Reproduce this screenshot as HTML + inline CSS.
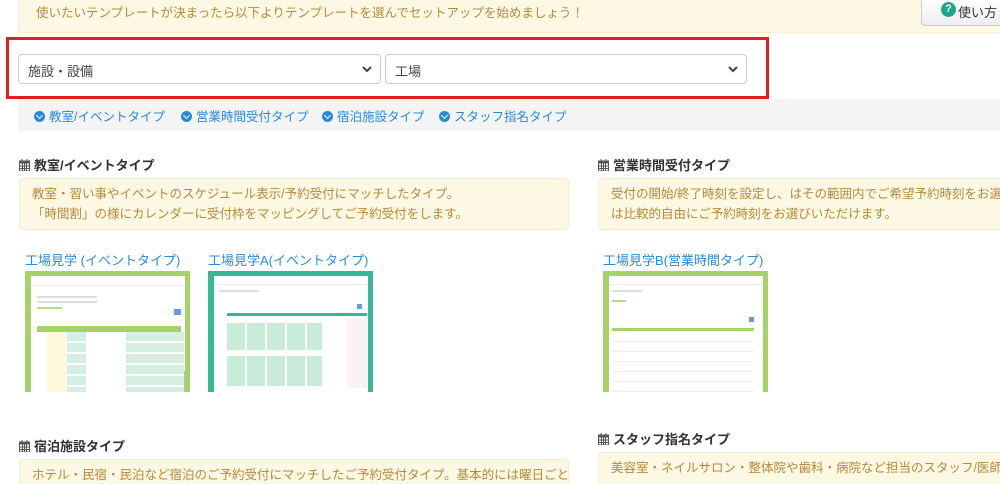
<!DOCTYPE html>
<html><head><meta charset="utf-8"><style>
*{box-sizing:border-box;margin:0;padding:0}
html,body{width:1000px;height:484px;overflow:hidden}
body{background:#fff;position:relative;font-family:"Liberation Sans","Noto Sans CJK JP",sans-serif;}
.a{position:absolute}
.alert{position:absolute;background:#fcf8e3;border:1px solid #faebcc;border-radius:4px;color:#b8893a;font-size:12.5px;line-height:20px;padding:5px 0 0 12px;white-space:nowrap;overflow:hidden}
.sel{position:absolute;top:54px;height:30px;border:1px solid #ccc;border-radius:4px;background:#fff;font-size:13px;color:#444;padding:6px 0 0 9px}
.sel svg{position:absolute;right:8px;top:11px}
.lk{position:absolute;top:106px;font-size:12.5px;color:#2a8ad8;white-space:nowrap}
.lk i{display:inline-block;width:11px;height:11px;border-radius:50%;background:#2a8ad8;margin-right:4px;vertical-align:-1px;position:relative}
.lk i:after{content:"";position:absolute;left:3px;top:2px;width:4px;height:4px;border-right:1.5px solid #fff;border-bottom:1.5px solid #fff;transform:rotate(45deg)}
h3{position:absolute;font-size:13px;color:#333;font-weight:bold;white-space:nowrap}
h3 svg{vertical-align:-1px;margin-right:4px}
.tt{position:absolute;font-size:13px;color:#2a8ad8;white-space:nowrap}
.th{position:absolute;top:271px;height:121px;padding:5px 5px 0 6px}
.th .in{background:#fff;height:100%;position:relative;overflow:hidden}
</style></head><body>
<div class="alert" style="left:18px;top:-12px;width:990px;height:45px;padding-top:14px;padding-left:17px">使いたいテンプレートが決まったら以下よりテンプレートを選んでセットアップを始めましょう！</div>
<div class="a" style="left:921px;top:-5px;width:90px;height:31px;border:1px solid #ccc;border-radius:4px;background:linear-gradient(#fff,#eee);font-size:13px;color:#333;padding:6px 0 0 36px">使い方</div>
<div class="a" style="left:941px;top:2px;width:15px;height:15px;border-radius:50%;background:#1aa88a;color:#fff;font-size:11px;font-weight:bold;text-align:center;line-height:15px">?</div>

<div class="a" style="left:6px;top:37px;width:763px;height:62px;border:3px solid #e0201e"></div>
<div class="sel" style="left:18px;width:363px">施設・設備<svg width="10" height="7"><path d="M1 1l4 4 4-4" stroke="#444" stroke-width="2" fill="none"/></svg></div>
<div class="sel" style="left:385px;width:362px">工場<svg width="10" height="7"><path d="M1 1l4 4 4-4" stroke="#444" stroke-width="2" fill="none"/></svg></div>

<div class="a" style="left:18px;top:99px;width:982px;height:32px;background:#f4f4f4"></div>
<div class="lk" style="left:34px"><i></i>教室/イベントタイプ</div>
<div class="lk" style="left:181px"><i></i>営業時間受付タイプ</div>
<div class="lk" style="left:322px"><i></i>宿泊施設タイプ</div>
<div class="lk" style="left:439px"><i></i>スタッフ指名タイプ</div>

<svg width="0" height="0" style="position:absolute"><defs><g id="cal"><rect x="0.5" y="2" width="10" height="10" fill="none" stroke="#555"/><rect x="0.5" y="2" width="10" height="2.5" fill="#555"/><path d="M3 0v3M8 0v3M0.5 7h10M0.5 9.5h10M3.5 4.5v7.5M5.5 4.5v7.5M7.5 4.5v7.5" stroke="#555" stroke-width="1"/></g></defs></svg>

<h3 style="left:19px;top:155px"><svg width="11" height="12"><use href="#cal"/></svg>教室/イベントタイプ</h3>
<div class="alert" style="left:19px;top:178px;width:550px;height:52px">教室・習い事やイベントのスケジュール表示/予約受付にマッチしたタイプ。<br>「時間割」の様にカレンダーに受付枠をマッピングしてご予約受付をします。</div>
<h3 style="left:598px;top:155px"><svg width="11" height="12"><use href="#cal"/></svg>営業時間受付タイプ</h3>
<div class="alert" style="left:598px;top:178px;width:410px;height:52px">受付の開始/終了時刻を設定し、はその範囲内でご希望予約時刻をお選び<br>は比較的自由にご予約時刻をお選びいただけます。</div>

<div class="tt" style="left:25px;top:250px">工場見学 (イベントタイプ)</div>
<div class="tt" style="left:208px;top:250px">工場見学A(イベントタイプ)</div>
<div class="tt" style="left:603px;top:250px">工場見学B(営業時間タイプ)</div>

<div class="th" style="left:25px;width:165px;background:#a5d36a"><div class="in">
<div class="a" style="left:0;right:0;top:0;height:10px;border-bottom:1px solid #eee"></div>
<div class="a" style="left:6px;top:20px;width:60px;height:2px;background:#ddd"></div>
<div class="a" style="left:6px;top:25px;width:60px;height:2px;background:#ddd"></div>
<div class="a" style="left:6px;top:31px;width:25px;height:2px;background:#b5dc8a"></div>
<div class="a" style="left:143px;top:33px;width:7px;height:6px;background:#5b9de8"></div>
<div class="a" style="left:6px;top:50px;right:4px;height:6px;background:#a5d36a"></div>
<div class="a" style="left:16px;top:56px;width:19px;bottom:0;background:#fdf9d8"></div>
<div class="a" style="left:36px;top:56px;width:19px;bottom:0;background:repeating-linear-gradient(#d5f0e2 0 9px,#fff 9px 11px)"></div>
<div class="a" style="left:95px;top:56px;width:58px;bottom:0;background:repeating-linear-gradient(#d5f0e2 0 9px,#fff 9px 11px)"></div>
<div class="a" style="left:153px;top:95px;width:3px;bottom:0;background:#bbb"></div>
</div></div>

<div class="th" style="left:208px;width:165px;background:#34b896"><div class="in">
<div class="a" style="left:0;right:0;top:0;height:9px;border-bottom:1px solid #eee"></div>
<div class="a" style="left:5px;top:14px;width:40px;height:2px;background:#ddd"></div>
<div class="a" style="left:143px;top:28px;width:5px;height:5px;background:#5b9de8"></div>
<div class="a" style="left:13px;top:37px;width:140px;height:3px;background:#34b896"></div>
<div class="a" style="left:13px;top:47px;width:95px;height:27px;background:repeating-linear-gradient(90deg,#c9ecd9 0 18px,#fff 18px 20px)"></div>
<div class="a" style="left:13px;top:80px;width:95px;height:30px;background:repeating-linear-gradient(90deg,#c9ecd9 0 18px,#fff 18px 20px)"></div>
<div class="a" style="left:133px;top:42px;width:20px;height:70px;background:#fdf2f2"></div>
</div></div>

<div class="th" style="left:603px;width:165px;background:#a5d36a"><div class="in">
<div class="a" style="left:0;right:0;top:0;height:9px;border-bottom:1px solid #eee"></div>
<div class="a" style="left:3px;top:14px;width:30px;height:2px;background:#ddd"></div>
<div class="a" style="left:3px;top:24px;width:14px;height:2px;background:#b5dc8a"></div>
<div class="a" style="left:140px;top:41px;width:5px;height:5px;background:#5b9de8"></div>
<div class="a" style="left:3px;top:52px;width:142px;height:3px;background:#a5d36a"></div>
<div class="a" style="left:3px;top:56px;width:142px;bottom:0;background:repeating-linear-gradient(#fff 0 9px,#eee 9px 10px)"></div>
</div></div>

<h3 style="left:19px;top:436px"><svg width="11" height="12"><use href="#cal"/></svg>宿泊施設タイプ</h3>
<div class="alert" style="left:19px;top:459px;width:550px;height:40px">ホテル・民宿・民泊など宿泊のご予約受付にマッチしたご予約受付タイプ。基本的には曜日ごと</div>
<h3 style="left:598px;top:429px"><svg width="11" height="12"><use href="#cal"/></svg>スタッフ指名タイプ</h3>
<div class="alert" style="left:598px;top:452px;width:410px;height:40px">美容室・ネイルサロン・整体院や歯科・病院など担当のスタッフ/医師を指</div>
</body></html>
